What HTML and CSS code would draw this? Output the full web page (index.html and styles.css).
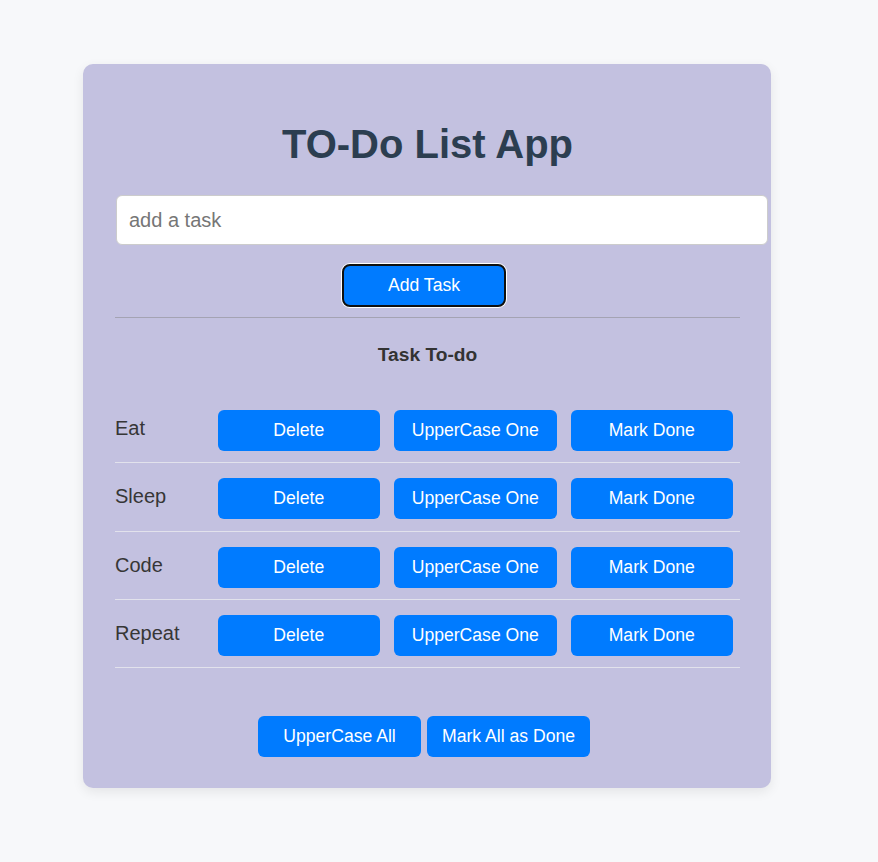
FILE: index.html
```html
<!DOCTYPE html>
<html lang="en">
<head>
<meta charset="utf-8">
<title>TO-Do List App</title>
<link rel="stylesheet" href="styles.css">
</head>
<body>
<div class="card">
  <h1 class="title">TO-Do List App</h1>
  <input class="task-input" type="text" placeholder="add a task">
  <div class="add-row"><button class="btn add-btn">Add Task</button></div>
  <div class="divider"></div>
  <h3 class="list-heading">Task To-do</h3>
  <ul class="task-list">
    <li class="task"><span class="task-name">Eat</span><button class="btn row-btn">Delete</button><button class="btn row-btn">UpperCase One</button><button class="btn row-btn">Mark Done</button></li>
    <li class="task"><span class="task-name">Sleep</span><button class="btn row-btn">Delete</button><button class="btn row-btn">UpperCase One</button><button class="btn row-btn">Mark Done</button></li>
    <li class="task"><span class="task-name">Code</span><button class="btn row-btn">Delete</button><button class="btn row-btn">UpperCase One</button><button class="btn row-btn">Mark Done</button></li>
    <li class="task"><span class="task-name">Repeat</span><button class="btn row-btn">Delete</button><button class="btn row-btn">UpperCase One</button><button class="btn row-btn">Mark Done</button></li>
  </ul>
  <div class="bottom-row">
    <button class="btn bottom-btn">UpperCase All</button>
    <button class="btn bottom-btn">Mark All as Done</button>
  </div>
</div>
</body>
</html>
```
FILE: styles.css
```css
html, body {
  margin: 0;
  padding: 0;
}
body {
  background: #f7f8fa;
  font-family: "Liberation Sans", Arial, sans-serif;
  min-height: 862px;
  padding-top: 64px;
  box-sizing: border-box;
}
.card {
  box-sizing: border-box;
  width: 688px;
  margin: 0 0 0 83px;
  padding: 57px 31px 31px 32px;
  background: #c3c1e0;
  border-radius: 10px;
  box-shadow: 0 4px 12px rgba(0, 0, 0, 0.08);
}
.title {
  margin: 0;
  font-size: 40px;
  line-height: 46px;
  font-weight: bold;
  color: #2c3e50;
  text-align: center;
}
.task-input {
  display: block;
  box-sizing: border-box;
  width: 652px;
  height: 50px;
  margin: 28px 0 0 1px;
  padding: 0 12px;
  border: 1px solid #cccccc;
  border-radius: 6px;
  background: #ffffff;
  font-family: "Liberation Sans", Arial, sans-serif;
  font-size: 20px;
  color: #333;
}
.task-input::placeholder {
  color: #767676;
}
.btn {
  box-sizing: border-box;
  height: 41px;
  padding: 0;
  border: none;
  border-radius: 6px;
  background: #007bff;
  color: #ffffff;
  font-family: "Liberation Sans", Arial, sans-serif;
  font-size: 17.6px;
  line-height: 41px;
  cursor: pointer;
}
.add-row {
  display: flex;
  justify-content: center;
  margin-top: 19px;
  padding-right: 7px;
}
.add-btn {
  width: 164px;
  height: 43px;
  line-height: 39px;
  border: 2px solid #101010;
  border-radius: 8px;
  box-shadow: 0 0 0 1px #ffffff;
}
.divider {
  margin-top: 10px;
  height: 1px;
  background: #a4a3b3;
}
.list-heading {
  margin: 26px 0 0;
  font-size: 19.2px;
  line-height: 22px;
  font-weight: bold;
  color: #333333;
  text-align: center;
}
.task-list {
  list-style: none;
  margin: 29px 0 0;
  padding: 0;
}
.task {
  display: flex;
  align-items: baseline;
  padding: 15px 0 11.33px;
  border-bottom: 1px solid #e2e2ec;
}
.task-name {
  flex: 1;
  font-size: 20px;
  line-height: 23px;
  color: #363636;
  position: relative;
  top: -1px;
}
.row-btn {
  width: 162.5px;
  margin: 0 7px;
}
.bottom-row {
  display: flex;
  justify-content: center;
  gap: 6px;
  margin-top: 48px;
  padding-right: 7px;
}
.bottom-btn {
  width: 163px;
}
```
